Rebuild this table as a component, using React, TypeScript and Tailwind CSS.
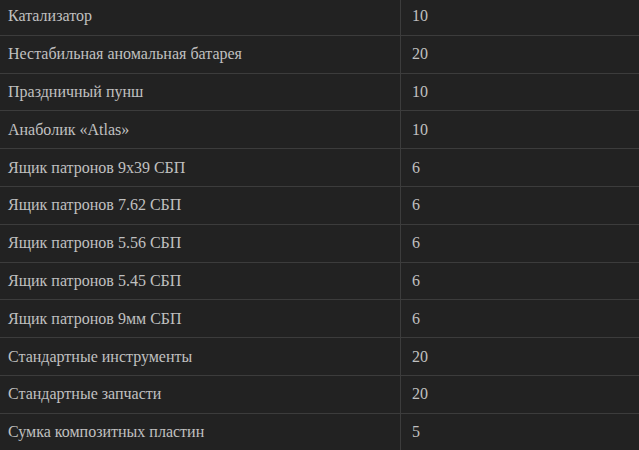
const ROWS: [string, number][] = [
  ['Катализатор', 10],
  ['Нестабильная аномальная батарея', 20],
  ['Праздничный пунш', 10],
  ['Анаболик «Atlas»', 10],
  ['Ящик патронов 9x39 СБП', 6],
  ['Ящик патронов 7.62 СБП', 6],
  ['Ящик патронов 5.56 СБП', 6],
  ['Ящик патронов 5.45 СБП', 6],
  ['Ящик патронов 9мм СБП', 6],
  ['Стандартные инструменты', 20],
  ['Стандартные запчасти', 20],
  ['Сумка композитных пластин', 5],
];

export default function App() {
  return (
    <div className="h-[450px] w-[639px] overflow-hidden bg-[#222222] font-['Liberation_Serif',serif] text-[16px] text-[#c0c0c0]">
      <div className="-mt-[2px] flex flex-col">
        {ROWS.map(([name, qty]) => (
          <div key={name} className="flex h-[37.8px] border-b border-[#3c3c3c]">
            <div className="flex w-[401px] items-center border-r border-[#3c3c3c] pl-2">{name}</div>
            <div className="flex items-center pl-[11px]">{qty}</div>
          </div>
        ))}
      </div>
    </div>
  );
}
